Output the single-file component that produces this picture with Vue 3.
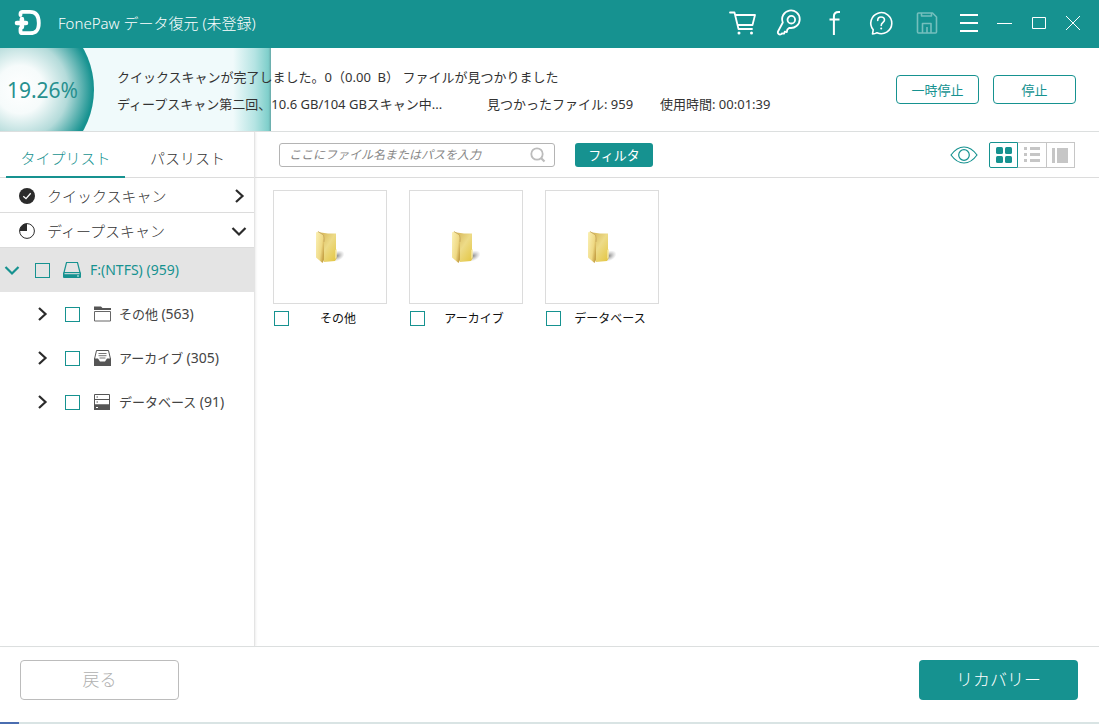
<script setup>
import { ref } from 'vue'

const progress = 19.26
const keyword = ref('')
const activeTab = ref('type')
const rootChecked = ref(false)

const tabs = [
  { id: 'type', label: 'タイプリスト' },
  { id: 'path', label: 'パスリスト' },
]

const categories = ref([
  { id: 'other', name: 'その他', count: 563, checked: false, picked: false },
  { id: 'archive', name: 'アーカイブ', count: 305, checked: false, picked: false },
  { id: 'database', name: 'データベース', count: 91, checked: false, picked: false },
])
</script>

<template>
  <div class="window">
    <header class="titlebar">
      <svg class="logo" width="28" height="28" viewBox="0 0 28 28" fill="none" stroke="#fff" aria-hidden="true">
        <path d="M6.500 6V4.800C6.500 3.500 7.200 2.800 8.500 2.800H16C21.500 2.800 24.800 6 24.800 14S21.500 24.200 16 24.200H8.500C7.200 24.200 6.500 23.400 6.500 22.200V19.500" stroke-width="3.800" stroke-linecap="round" />
        <path d="M3 14H12M7.900 10V18" stroke-width="4.600" stroke-linecap="round" />
      </svg>
      <h1 class="title">FonePaw データ復元 (未登録)</h1>
      <nav class="tools" aria-label="ツール">
        <button class="tool" type="button" aria-label="購入">
          <svg width="28" height="28" viewBox="0 0 28 28" fill="none" stroke="#fff" stroke-width="1.800">
            <path d="M1 3.500H5.500L9.500 20H23M6 6H26L23.500 16H8.700" stroke-linejoin="round" stroke-linecap="round" />
            <circle cx="10" cy="24" r="1.500" fill="#fff" stroke="none" />
            <circle cx="22.500" cy="24" r="1.500" fill="#fff" stroke="none" />
          </svg>
        </button>
        <button class="tool" type="button" aria-label="登録">
          <svg width="28" height="28" viewBox="0 0 28 28" fill="none" stroke="#fff" stroke-width="1.800" stroke-linejoin="round">
            <path d="M7.800 13.500A8.800 8.800 0 1 1 14.200 18.800L12.300 20.700L11.800 23L9.700 22.600L9.200 24.600L7.200 24.300L6 25.300C4.500 26.200 2.300 24.600 3 22.500Z" />
            <circle cx="16.300" cy="10.700" r="3.800" />
          </svg>
        </button>
        <button class="tool" type="button" aria-label="Facebook">
          <svg width="28" height="28" viewBox="0 0 28 28" fill="none" stroke="#fff" stroke-width="2">
            <path d="M19 3H17.500C14.500 3 12.900 4.500 12.900 7.500V26M8.500 10.400H18.500" />
          </svg>
        </button>
        <button class="tool" type="button" aria-label="ヘルプ">
          <svg width="28" height="28" viewBox="0 0 28 28" fill="none" stroke="#fff" stroke-width="1.600" stroke-linejoin="round">
            <path d="M5.500 25L6.200 20.800A10.500 10.500 0 1 1 10 23.700C8.500 24.700 7 25 5.500 25Z" />
            <path d="M10.700 11.500C10.700 9.300 12 8 14 8S17.500 9.300 17.500 11C17.500 13.300 14.200 13.500 14.200 16.500" stroke-linecap="round" />
            <circle cx="14.200" cy="19.600" r="1" fill="#fff" stroke="none" />
          </svg>
        </button>
        <button class="tool" type="button" aria-label="保存" disabled>
          <svg width="28" height="28" viewBox="0 0 28 28" fill="none" stroke="#74bfbd" stroke-width="1.600" stroke-linejoin="round">
            <path d="M5.500 4H19.500L23.500 8V23Q23.500 24 22.500 24H5.500Q4.500 24 4.500 23V5Q4.500 4 5.500 4Z" />
            <path d="M8.500 4V7H18.500V4M9.500 24V14.500H18V24M14 18V24" />
          </svg>
        </button>
        <button class="tool menu" type="button" aria-label="メニュー">
          <svg width="28" height="28" viewBox="0 0 28 28" stroke="#fff" stroke-width="2">
            <path d="M5 6H23M5 14H23M5 22H23" />
          </svg>
        </button>
      </nav>
      <div class="controls">
        <button class="control" type="button" aria-label="最小化">
          <svg width="16" height="16" viewBox="0 0 16 16" stroke="#fff"><path d="M0 8.500H15" /></svg>
        </button>
        <button class="control" type="button" aria-label="最大化">
          <svg width="16" height="16" viewBox="0 0 16 16" stroke="#fff" fill="none"><path d="M1.500 2.500H14.500V13.500H1.500Z" /></svg>
        </button>
        <button class="control" type="button" aria-label="閉じる">
          <svg width="16" height="16" viewBox="0 0 16 16" stroke="#fff"><path d="M1 1L15 15M15 1L1 15" /></svg>
        </button>
      </div>
    </header>

    <section class="status">
      <div class="fill"></div>
      <div class="ball"><span>{{ progress }}%</span></div>
      <div class="messages">
        <p class="line">クイックスキャンが完了しました。0（0.00&nbsp; B） ファイルが見つかりました</p>
        <p class="line">
          <span class="deep">ディープスキャン第二回、10.6 GB/104 GBスキャン中...</span>
          <span class="found">見つかったファイル: 959</span>
          <span>使用時間: 00:01:39</span>
        </p>
      </div>
      <div class="scan-actions">
        <button class="outline" type="button">一時停止</button>
        <button class="outline" type="button">停止</button>
      </div>
    </section>

    <div class="body">
      <aside class="sidebar">
        <div class="tabs" role="tablist">
          <button
            v-for="tab in tabs"
            :key="tab.id"
            type="button"
            role="tab"
            class="tab"
            :class="{ active: activeTab === tab.id }"
            :aria-selected="activeTab === tab.id"
            @click="activeTab = tab.id"
          >{{ tab.label }}</button>
        </div>
        <button class="scan" type="button">
          <svg width="16" height="16" viewBox="0 0 16 16" fill="none">
            <circle cx="8" cy="8" r="8" fill="#2b2b2b" />
            <path d="M4.300 8.300L7 10.700L11.700 5.300" stroke="#fff" stroke-width="1.300" />
          </svg>
          <span>クイックスキャン</span>
          <svg class="arrow" width="16" height="16" viewBox="0 0 16 16" fill="none" stroke="#2b2b2b" stroke-width="2.200"><path d="M5 2L11.500 8L5 14" /></svg>
        </button>
        <button class="scan" type="button">
          <svg width="16" height="16" viewBox="0 0 16 16" fill="none">
            <circle cx="8" cy="8" r="7.400" stroke="#2b2b2b" />
            <path d="M8 8V.6A7.400 7.400 0 0 0 .6 8Z" fill="#2b2b2b" />
          </svg>
          <span>ディープスキャン</span>
          <svg class="arrow" width="16" height="16" viewBox="0 0 16 16" fill="none" stroke="#2b2b2b" stroke-width="2.200"><path d="M1.500 5L8 11.500L14.500 5" /></svg>
        </button>

        <ul class="tree">
          <li class="node root">
            <button class="toggle" type="button" aria-label="折りたたむ">
              <svg width="16" height="16" viewBox="0 0 16 16" fill="none" stroke="#169290" stroke-width="2.200"><path d="M1.500 5L8 11.500L14.500 5" /></svg>
            </button>
            <input id="drive" v-model="rootChecked" class="check" type="checkbox" />
            <label for="drive">
              <svg width="20" height="18" viewBox="0 0 20 18" fill="none">
                <path d="M2 11.500L4.500 1.500H15.500L18 11.500" stroke="#169290" stroke-width="1.200" />
                <path d="M2 11H18Q19 11 19 12V16Q19 17 18 17H2Q1 17 1 16V12Q1 11 2 11Z" fill="#169290" />
                <path d="M2.500 12.700H17.500" stroke="#e4e4e4" /><circle cx="16" cy="15" r=".8" fill="#fff" />
              </svg>
              <span class="count">F:(NTFS) (959)</span>
            </label>
          </li>
          <li v-for="item in categories" :key="item.id" class="node child">
            <button class="toggle" type="button" :aria-label="item.name + 'を展開'">
              <svg width="16" height="16" viewBox="0 0 16 16" fill="none" stroke="#2b2b2b" stroke-width="2.200"><path d="M5 2L11.500 8L5 14" /></svg>
            </button>
            <input :id="'tree-' + item.id" v-model="item.checked" class="check" type="checkbox" />
            <label :for="'tree-' + item.id">
              <svg v-if="item.id === 'other'" width="20" height="18" viewBox="0 0 20 18">
                <path d="M1 1.500H8L9.500 3H18V5H1Z" fill="#555" />
                <path d="M1.500 6.500H17.500V16H1.500Z" fill="none" stroke="#666" />
              </svg>
              <svg v-else-if="item.id === 'archive'" width="20" height="18" viewBox="0 0 20 18" fill="none">
                <path d="M1.500 10L3.500 1.500H15.500L17.500 10" stroke="#555" />
                <path d="M5.500 4.500H13.500M5.500 6.700H13.500M6.500 9H12.500" stroke="#777" />
                <path d="M1 9.500H5L7 12.500H12L14 9.500H18V17H1Z" fill="#555" />
              </svg>
              <svg v-else width="20" height="18" viewBox="0 0 20 18" fill="none">
                <path d="M1.500 1.500H16.500V12H1.500ZM1.500 6.500H16.500" stroke="#555" />
                <path d="M1 11.500H17V17H1Z" fill="#555" />
                <path d="M3.500 4H5M3.500 9H5" stroke="#555" /><path d="M3 14.500H5" stroke="#fff" />
              </svg>
              <span>{{ item.name }} <span class="count">({{ item.count }})</span></span>
            </label>
          </li>
        </ul>
      </aside>

      <main class="content">
        <div class="toolbar">
          <div class="search">
            <input v-model="keyword" type="text" aria-label="検索" placeholder="ここにファイル名またはパスを入力" />
            <svg width="16" height="16" viewBox="0 0 16 16" fill="none" stroke="#bcbcbc" stroke-width="1.800"><circle cx="7" cy="7" r="5.700" /><path d="M11 11L14.500 14.500" stroke-width="2.200" /></svg>
          </div>
          <button class="filter" type="button">フィルタ</button>
          <button class="eye" type="button" aria-label="プレビュー">
            <svg width="28" height="18" viewBox="0 0 28 18" fill="none" stroke="#169290" stroke-width="1.200">
              <path d="M1 9C5 3.500 9 1 14 1S23 3.500 27 9C23 14.500 19 17 14 17S5 14.500 1 9Z" /><circle cx="14" cy="9" r="5.300" />
            </svg>
          </button>
          <div class="views">
            <button class="view selected" type="button" aria-label="グリッド表示">
              <svg width="18" height="18" viewBox="0 0 18 18" fill="#169290"><rect x="1" y="1" width="7" height="7" rx="1.500" /><rect x="10" y="1" width="7" height="7" rx="1.500" /><rect x="1" y="10" width="7" height="7" rx="1.500" /><rect x="10" y="10" width="7" height="7" rx="1.500" /></svg>
            </button>
            <button class="view" type="button" aria-label="リスト表示">
              <svg width="18" height="18" viewBox="0 0 18 18" fill="#c6c6c6"><path d="M1 1H4V4H1ZM7 1H17V4H7ZM1 7H4V10H1ZM7 7H17V10H7ZM1 13H4V16H1ZM7 13H17V16H7Z" /></svg>
            </button>
            <button class="view" type="button" aria-label="詳細表示">
              <svg width="18" height="18" viewBox="0 0 18 18" fill="#c6c6c6"><path d="M1 2H4V17H1ZM6 2H17V17H6Z" /></svg>
            </button>
          </div>
        </div>
        <ul class="grid">
          <li v-for="item in categories" :key="item.id" class="card">
            <div class="thumb">
              <svg width="32" height="34" viewBox="0 0 32 34" aria-hidden="true">
                <defs>
                  <linearGradient :id="'back-' + item.id" x1="0" x2="1" y1="0" y2="1"><stop offset="0" stop-color="#d0ad4c" /><stop offset=".5" stop-color="#eddb88" /><stop offset="1" stop-color="#e3c53f" /></linearGradient>
                  <linearGradient :id="'front-' + item.id" x1="0" x2="1" y1="0" y2=".6"><stop offset="0" stop-color="#fbf1b6" /><stop offset=".7" stop-color="#efd984" /><stop offset="1" stop-color="#c9a54a" /></linearGradient>
                  <radialGradient :id="'shade-' + item.id"><stop offset="0" stop-color="#666" stop-opacity=".75" /><stop offset="1" stop-color="#999" stop-opacity="0" /></radialGradient>
                </defs>
                <ellipse cx="23" cy="26" rx="8" ry="5" :fill="'url(#shade-' + item.id + ')'" transform="rotate(-25 23 26)" />
                <path d="M3 2L14 3.500L22 3.500V19L22.500 20V28.500L21 31L10 32Z" :fill="'url(#back-' + item.id + ')'" />
                <path d="M21.500 20L22.500 19V27L21.500 29Z" fill="#fff7c9" />
                <path d="M2 2.500L4 1.500L9.500 5Q10.500 8 10 12V30L8.500 33L2 27.500Z" :fill="'url(#front-' + item.id + ')'" />
                <path d="M4 1.500L9.500 5Q10.500 8 10 12" fill="none" stroke="#c5a55b" stroke-width=".8" />
              </svg>
            </div>
            <div class="caption">
              <input :id="'card-' + item.id" v-model="item.picked" class="check" type="checkbox" />
              <label :for="'card-' + item.id">{{ item.name }}</label>
            </div>
          </li>
        </ul>
      </main>
    </div>

    <footer class="footer">
      <button class="back" type="button" disabled>戻る</button>
      <button class="recover" type="button">リカバリー</button>
    </footer>
    <div class="edge"></div>
  </div>
</template>

<style>
body {
  margin: 0;
}
</style>

<style scoped>
.window {
  display: flex;
  flex-direction: column;
  min-height: 100vh;
  background: #fff;
  color: #333;
  font-family: "Noto Sans", "Noto Sans CJK JP", sans-serif;
  font-size: 13px;
  line-height: 20px;
}
.window *,
.window {
  box-sizing: border-box;
}
button,
input {
  margin: 0;
  padding: 0;
  font: inherit;
  color: inherit;
  background: none;
  border: 0;
}
button {
  cursor: pointer;
}
svg {
  display: block;
  flex: none;
}
ul {
  margin: 0;
  padding: 0;
  list-style: none;
}

.titlebar {
  display: flex;
  align-items: center;
  height: 48px;
  padding: 0 18px 2px 14px;
  background: #169290;
}
.title {
  margin: 0 auto 0 16px;
  color: #fff;
  font-size: 15px;
  font-weight: 300;
  white-space: nowrap;
}
.tools {
  display: flex;
  gap: 18px;
}
.menu {
  margin-left: -4px;
}
.controls {
  display: flex;
  gap: 18px;
  margin-left: 14px;
}

.status {
  position: relative;
  display: flex;
  align-items: center;
  height: 84px;
  padding-right: 23px;
  border-bottom: 1px solid #dcdfdf;
}
.fill {
  position: absolute;
  inset: 0 auto 0 0;
  width: 271px;
  background: linear-gradient(90deg, #f0fafb 0%, #f0fafb 86%, #b5e4e3 94%, #7fcfcb 99%, #69a9a9 100%);
}
.ball {
  position: relative;
  display: flex;
  align-items: center;
  justify-content: center;
  align-self: stretch;
  width: 94px;
  padding-right: 9px;
  color: #27908f;
  font-size: 21px;
  background: radial-gradient(circle at 20px 50%, #fff 0%, #f6fbfb 24px, #b4dbda 48px, #169290 73px);
  clip-path: circle(84px at 10px 50%);
}
.messages {
  position: relative;
  flex: 1;
  margin-left: 23px;
  padding-top: 2px;
}
.line {
  display: flex;
  margin: 0;
  line-height: 27px;
  white-space: nowrap;
}
.deep {
  width: 370px;
}
.found {
  width: 173px;
}
.scan-actions {
  display: flex;
  gap: 14px;
}
.outline {
  width: 83px;
  height: 29px;
  color: #169290;
  border: 1px solid #169290;
  border-radius: 4px;
}

.body {
  display: flex;
  flex: 1;
}
.sidebar {
  width: 255px;
  border-right: 1px solid #e4e4e4;
  box-shadow: 1px 0 2px #eee;
}
.tabs {
  display: flex;
  gap: 3px;
  height: 46px;
  padding: 0 7px 0 6px;
  border-bottom: 1px solid #dcdcdc;
}
.tab {
  flex: 1;
  height: 46px;
  padding-top: 8px;
  font-size: 15px;
  font-weight: 300;
  border-bottom: 2px solid transparent;
}
.tab.active {
  color: #169290;
  border-color: #169290;
}
.scan {
  display: flex;
  align-items: center;
  gap: 12px;
  width: 100%;
  height: 35px;
  padding: 1px 7px 0 19px;
  font-size: 15px;
  font-weight: 300;
  border-bottom: 1px solid #dcdcdc;
}
.arrow {
  margin-left: auto;
}
.node {
  display: flex;
  align-items: center;
  height: 44px;
  padding-left: 34px;
}
.root {
  padding-left: 4px;
  color: #169290;
  background: #e4e4e4;
}
.toggle {
  margin-right: 15px;
}
.check {
  flex: none;
  width: 15px;
  height: 15px;
  border: 1px solid #169290;
  appearance: none;
  cursor: pointer;
}
.check:checked {
  background: #169290;
}
.node label {
  display: flex;
  align-items: center;
  gap: 7px;
  margin-left: 12px;
}
.child label {
  margin-left: 13px;
  color: #444;
}
.child label {
  gap: 6px;
}
.root label {
  gap: 8px;
}
.count {
  font-size: 14px;
}

.content {
  flex: 1;
}
.toolbar {
  display: flex;
  align-items: center;
  height: 46px;
  padding: 0 24px;
  border-bottom: 1px solid #dcdcdc;
}
.search {
  display: flex;
  align-items: center;
  width: 276px;
  height: 24px;
  padding: 0 8px 0 9px;
  border: 1px solid #b4b4b4;
  border-radius: 3px;
}
.search input {
  flex: 1;
  min-width: 0;
  font-size: 12px;
  outline: none;
}
.search input::placeholder {
  color: #888;
  font-style: italic;
  opacity: 1;
}
.filter {
  width: 78px;
  height: 24px;
  margin-left: 20px;
  color: #fff;
  background: #169290;
  border-radius: 3px;
}
.eye {
  margin-left: auto;
}
.views {
  display: flex;
  width: 86px;
  margin-left: 11px;
}
.view {
  display: flex;
  flex: 1;
  align-items: center;
  justify-content: center;
  height: 26px;
  border: 1px solid #c6c6c6;
  border-left: 0;
}
.view.selected {
  border: 1px solid #169290;
  border-radius: 2px 0 0 2px;
}
.grid {
  display: flex;
  flex-wrap: wrap;
  gap: 22px;
  padding: 12px 18px;
}
.card {
  width: 114px;
}
.thumb {
  display: flex;
  align-items: center;
  justify-content: center;
  height: 114px;
  border: 1px solid #dcdcdc;
}
.caption {
  display: flex;
  align-items: flex-start;
  margin-top: 5px;
  padding-left: 1px;
  color: #111;
  font-size: 12px;
}
.caption .check {
  margin-top: 2px;
}
.caption label {
  flex: 1;
  text-align: center;
}

.footer {
  display: flex;
  align-items: center;
  justify-content: space-between;
  height: 76px;
  padding: 0 21px 9px 20px;
  border-top: 1px solid #dcdfdf;
}
.back,
.recover {
  width: 159px;
  height: 40px;
  font-size: 17px;
  font-weight: 300;
  border-radius: 4px;
}
.back {
  color: #b0b0b0;
  border: 1px solid #bcbcbc;
}
.recover {
  color: #fff;
  background: #169290;
}
.edge {
  height: 2px;
  background: linear-gradient(90deg, #4a6db0 19px, #d9e4e4 19px);
}
</style>
